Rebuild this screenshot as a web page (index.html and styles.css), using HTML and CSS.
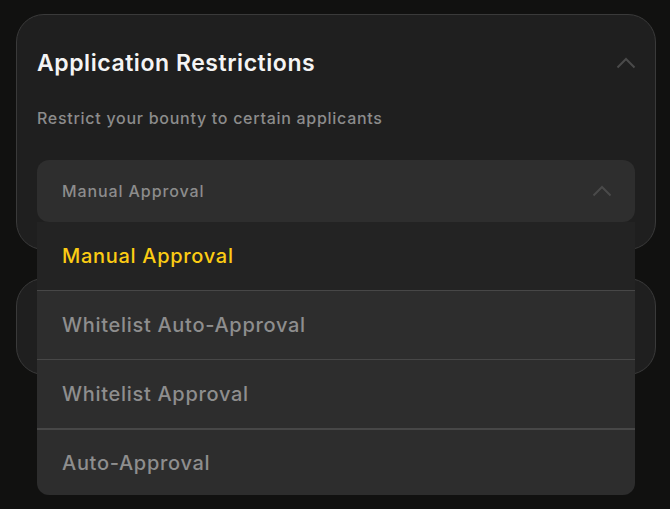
FILE: index.html
```html
<!DOCTYPE html>
<html lang="en">
<head>
<meta charset="utf-8">
<title>Application Restrictions</title>
<link rel="stylesheet" href="styles.css">
</head>
<body>
<main class="page">
  <section class="card card-main">
    <div class="card-header">
      <h2 class="card-title">Application Restrictions</h2>
      <svg class="chev" width="20" height="12" viewBox="0 0 20 12"><path d="M1.5 10.5 L10 2 L18.5 10.5" fill="none" stroke="#4a4a4a" stroke-width="2"/></svg>
    </div>
    <p class="card-sub">Restrict your bounty to certain applicants</p>
    <div class="select-wrap">
      <div class="select">
        <span class="select-value">Manual Approval</span>
        <svg class="chev" width="20" height="12" viewBox="0 0 20 12"><path d="M1.5 10.5 L10 2 L18.5 10.5" fill="none" stroke="#4a4a4a" stroke-width="2"/></svg>
      </div>
      <ul class="menu">
        <li class="menu-item active">Manual Approval</li>
        <li class="menu-item">Whitelist Auto-Approval</li>
        <li class="menu-item thick">Whitelist Approval</li>
        <li class="menu-item">Auto-Approval</li>
      </ul>
    </div>
  </section>
  <section class="card card-second"></section>
</main>
</body>
</html>
```
FILE: styles.css
```css
* { box-sizing: border-box; }
html, body { margin: 0; padding: 0; }
body {
  background: #111110;
  font-family: "Inter", "Open Sans", sans-serif;
  width: 670px;
  height: 509px;
  overflow: hidden;
}
.page {
  padding: 14px 14px 0 16px;
  display: flex;
  flex-direction: column;
  gap: 28px;
}
.card {
  background: #1f1f1f;
  border: 1px solid #3a3a3a;
  border-radius: 28px;
}
.card-main {
  padding: 34px 20px 27px 20px;
  position: relative;
  z-index: 1;
}
.card-second { height: 97px; }
.card-header {
  display: flex;
  align-items: center;
  justify-content: space-between;
  height: 28px;
}
.card-title {
  margin: 0;
  color: #f4f4f4;
  font-family: "Inter", sans-serif;
  font-size: 23px;
  font-weight: 600;
  line-height: 28px;
  letter-spacing: 0.55px;
}
.chev { display: block; width: 20px; height: 12px; margin-right: -1px; }
.card-sub {
  margin: 30px 0 0 0;
  color: #8c8c8c;
  font-size: 16px;
  line-height: 22px;
  font-weight: 500;
  letter-spacing: 0.72px;
}
.select-wrap {
  margin-top: 31px;
  position: relative;
}
.select {
  height: 62px;
  background: #2e2e2e;
  border-radius: 12px;
  display: flex;
  align-items: center;
  justify-content: space-between;
  padding: 0 24px 0 25px;
}
.select-value {
  color: #8c8c8c;
  font-size: 16px;
  font-weight: 500;
  letter-spacing: 0.9px;
}
.menu {
  position: absolute;
  top: 100%;
  left: 0;
  right: 0;
  margin: 0;
  padding: 0;
  list-style: none;
  background: #2d2d2d;
  border-radius: 0 0 12px 12px;
  overflow: hidden;
}
.menu-item {
  height: 69px;
  display: flex;
  align-items: center;
  padding-left: 25px;
  color: #8e8e8e;
  font-size: 20px;
  font-weight: 500;
  letter-spacing: 0.7px;
  border-top: 1px solid #474747;
}
.menu-item:first-child { border-top: 0; height: 68px; }
.menu-item.active { background: #232323; color: #fccc14; }
.menu-item.thick + .menu-item { border-top: 2px solid #474747; height: 67px; }
```
